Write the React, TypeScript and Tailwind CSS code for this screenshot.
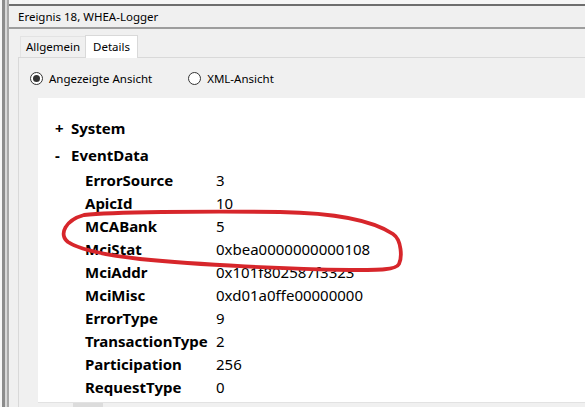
const font = "font-['Noto_Sans',sans-serif]";

const rows: [string, string][] = [
  ["ErrorSource", "3"],
  ["ApicId", "10"],
  ["MCABank", "5"],
  ["MciStat", "0xbea0000000000108"],
  ["MciAddr", "0x101f802587f3323"],
  ["MciMisc", "0xd01a0ffe00000000"],
  ["ErrorType", "9"],
  ["TransactionType", "2"],
  ["Participation", "256"],
  ["RequestType", "0"],
];

const Radio = ({ checked, label }: { checked?: boolean; label: string }) => (
  <div className="flex items-center gap-[6px]">
    <span className="w-[13px] h-[13px] rounded-full border border-[#333] bg-white flex items-center justify-center">
      {checked && <span className="w-[7px] h-[7px] rounded-full bg-[#333]" />}
    </span>
    <span className="text-[11.5px] text-black">{label}</span>
  </div>
);

export default function App() {
  return (
    <div className={`relative w-[585px] h-[407px] overflow-hidden bg-[#f0f0f0] flex ${font}`}>
      {/* window frame, left side */}
      <div className="w-[2px] bg-[#f7f7f7]" />
      <div className="w-[3px] bg-[#8c8c8c]" />
      <div className="w-[2px] bg-[#d8d8d8]" />
      <div className="w-[2px] bg-[#a8a8a8]" />

      <div className="flex-1 flex flex-col">
        <div className="h-[4px] bg-[#f6f6f6]" />
        <div className="h-[2px] bg-[#6e6e6e]" />
        <div className="h-[21px] flex items-center pl-[9px] text-[11.5px] text-black">
          Ereignis 18, WHEA-Logger
        </div>
        <div className="h-[2px] bg-[#9d9d9d]" />

        {/* tabs */}
        <div className="h-[28px] flex items-end pl-[11px]">
          <div className="h-[21px] w-[65px] flex items-center justify-center text-[11.5px] text-black border-t border-l border-[#e3e3e3]">
            Allgemein
          </div>
          <div className="h-[23px] w-[53px] flex items-center justify-center text-[11.5px] text-black bg-white border-t border-l border-r border-[#d9d9d9] -mb-px relative">
            Details
          </div>
        </div>

        {/* panel */}
        <div className="flex-1 flex flex-col ml-[9px] border-t border-l border-[#d9d9d9]">
          <div className="h-[40px] flex items-center gap-[36px] pl-[11px] pt-[1px]">
            <Radio checked label="Angezeigte Ansicht" />
            <Radio label="XML-Ansicht" />
          </div>
          <div className="flex-1 ml-[19px] bg-white pt-[19px] text-[15px] text-black">
            <div className="h-[23px] flex items-center mb-[4px]">
              <span className="w-[33px] pl-[17px] font-bold">+</span>
              <span className="font-bold">System</span>
            </div>
            <div className="h-[23px] flex items-center mb-[2px]">
              <span className="w-[33px] pl-[17px] font-bold">-</span>
              <span className="font-bold">EventData</span>
            </div>
            {rows.map(([k, v]) => (
              <div key={k} className="h-[23px] flex items-center pl-[47px]">
                <span className="w-[131px] font-bold whitespace-nowrap">{k}</span>
                <span>{v}</span>
              </div>
            ))}
          </div>
          <div className="h-[5px] border-t border-[#e2e2e2] ml-[19px] flex">
            <div className="ml-[35px] w-[30px] bg-[#dcdcdc]" />
          </div>
        </div>
      </div>

      {/* red marker drawn over the screenshot */}
      <svg className="absolute inset-0 pointer-events-none" width="585" height="407" viewBox="0 0 585 407">
        <path
          d="M 84 215 C 110 212, 200 211, 280 212 C 340 213, 375 222, 393 234 C 402 240, 402 258, 399 264 C 396 270, 380 270, 350 270 C 290 269, 200 265, 140 259 C 105 255, 80 250, 68 242 C 58 234, 66 220, 84 215 Z"
          fill="none"
          stroke="#d7262b"
          strokeWidth="3.8"
          strokeLinejoin="round"
        />
      </svg>
    </div>
  );
}
